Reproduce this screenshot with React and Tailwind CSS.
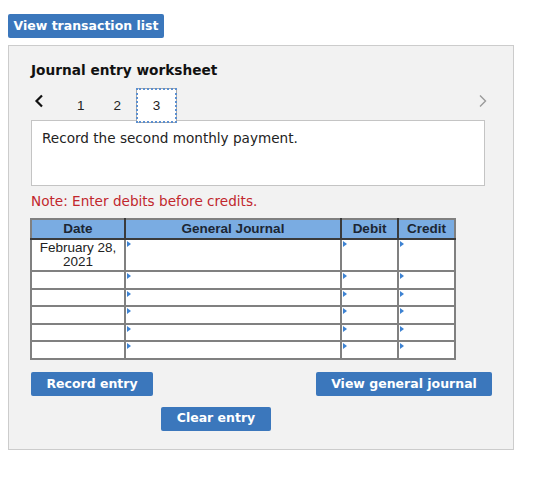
const blue = "bg-[#3b77bc]";

function Btn({ children, className }) {
  return (
    <button
      className={`${blue} text-white font-bold text-[12.5px] leading-none rounded-[2px] h-[24px] ${className}`}
      style={{ fontFamily: '"DejaVu Sans", Verdana, sans-serif' }}
    >
      {children}
    </button>
  );
}

function Mark() {
  return (
    <span className="absolute left-[1px] top-[1px] w-0 h-0 border-y-[3px] border-y-transparent border-l-[4px] border-l-[#3d82d2]" />
  );
}

export default function App() {
  const rows = [32, 18, 17, 18, 17, 18];

  return (
    <div
      className="w-[560px] h-[492px] bg-white text-[#222]"
      style={{ fontFamily: '"DejaVu Sans", Verdana, sans-serif' }}
    >
      <div className="pt-[13px] pl-[8px]">
        <Btn className="w-[156px]">View transaction list</Btn>
      </div>

      <div className="ml-[8px] mt-[7px] w-[506px] h-[405px] bg-[#f2f2f2] border border-[#cccccc] pl-[22px] pt-[16px]">
        <h2 className="text-[13.7px] font-bold leading-[16px] text-[#111]">Journal entry worksheet</h2>

        <div className="relative mt-[10px] h-[35px] w-[454px] flex items-start">
          <svg className="mt-[6px] ml-[3px]" width="10" height="14" viewBox="0 0 10 14">
            <polyline points="8,1.5 2.5,7 8,12.5" fill="none" stroke="#111" strokeWidth="2.2" />
          </svg>
          <div
            className="flex items-start text-[13.5px] text-[#222]"
            style={{ fontFamily: '"Liberation Sans", Arial, sans-serif' }}
          >
            <span className="ml-[33px] mt-[8px]">1</span>
            <span className="ml-[29px] mt-[8px]">2</span>
            <span className="ml-[15px] w-[41px] h-[35px] outline-dotted outline-2 outline-[#5b8fd0] -outline-offset-2 bg-white border border-[#aaa] flex items-center justify-center relative z-10">
              3
            </span>
          </div>
          <svg className="absolute right-[-3px] top-[6px]" width="10" height="14" viewBox="0 0 10 14">
            <polyline points="2,1.5 7.5,7 2,12.5" fill="none" stroke="#9a9a9a" strokeWidth="1.4" />
          </svg>
        </div>

        <div className="-mt-[3px] w-[454px] h-[66px] bg-white border border-[#c4c4c4] pl-[10px] pt-[9px] text-[13.6px] leading-[16px] text-[#222]">
          Record the second monthly payment.
        </div>

        <p className="mt-[7px] text-[13.6px] leading-[16px] text-[#c1272d]">Note: Enter debits before credits.</p>

        <table
          className="mt-[9px] border-collapse border-2 border-[#808080] text-[13.5px] leading-[14px] -ml-[1px]"
          style={{ fontFamily: '"Liberation Sans", Arial, sans-serif' }}
        >
          <thead>
            <tr className="bg-[#7aace2] h-[20px] text-[#1c2633]">
              <th className="w-[94px] border-2 border-[#3a3a3a] border-l-[#808080] border-t-[#808080] font-bold p-0">Date</th>
              <th className="w-[216px] border-2 border-[#3a3a3a] border-t-[#808080] font-bold p-0">General Journal</th>
              <th className="w-[57px] border-2 border-[#3a3a3a] border-t-[#808080] font-bold p-0">Debit</th>
              <th className="w-[57px] border-2 border-[#3a3a3a] border-t-[#808080] border-r-[#808080] font-bold p-0">Credit</th>
            </tr>
          </thead>
          <tbody className="bg-white">
            {rows.map((h, i) => (
              <tr key={i} style={{ height: h }}>
                <td className="border-2 border-[#808080] text-center align-top p-0 text-[#222]">
                  {i === 0 ? (
                    <span className="block pt-[1px]">
                      February 28,
                      <br />
                      2021
                    </span>
                  ) : null}
                </td>
                <td className="border-2 border-[#808080] relative p-0"><Mark /></td>
                <td className="border-2 border-[#808080] relative p-0"><Mark /></td>
                <td className="border-2 border-[#808080] relative p-0"><Mark /></td>
              </tr>
            ))}
          </tbody>
        </table>

        <div className="mt-[12px] w-[461px] flex justify-between">
          <Btn className="w-[122px]">Record entry</Btn>
          <Btn className="w-[176px]">View general journal</Btn>
        </div>
        <div className="mt-[9px] pl-[130px]">
          <Btn className="w-[110px]">Clear entry</Btn>
        </div>
      </div>
    </div>
  );
}
